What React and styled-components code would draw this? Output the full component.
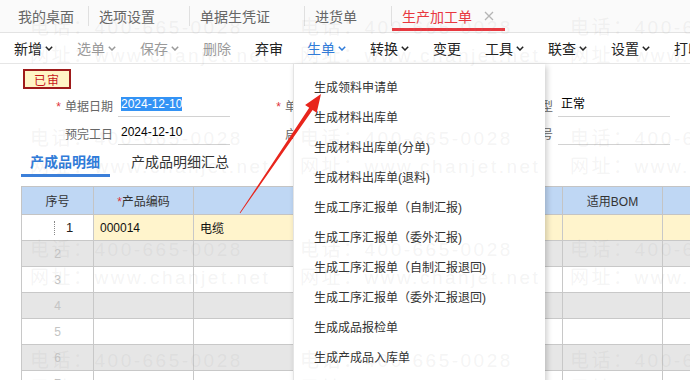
import React from "react";
import styled, { createGlobalStyle } from "styled-components";

const GlobalStyle = createGlobalStyle`
  html, body {
    margin: 0;
    padding: 0;
    background: #fff;
  }
  body {
    font-family: "Liberation Sans", "Noto Sans CJK SC", sans-serif;
    color: #333;
  }
`;

const Page = styled.div`
  position: relative;
  width: 690px;
  height: 380px;
  overflow: hidden;
  background: #fff;
`;

/* top tabs */
const TabBar = styled.div`
  display: flex;
  align-items: stretch;
  height: 32px;
  background: #fafafa;
  border-bottom: 1px solid #e3e3e3;
`;

const Tab = styled.div`
  position: relative;
  display: flex;
  align-items: center;
  gap: 12px;
  padding: ${(p) => (p.$first ? "0 14px 0 18px" : p.$active ? "0 11px 0 10px" : "0 34px 0 10px")};
  font-size: 14px;
  white-space: nowrap;
  color: ${(p) => (p.$active ? "#e8383f" : "#666")};

  &::after {
    content: "";
    display: ${(p) => (p.$active ? "block" : "none")};
    position: absolute;
    left: 0;
    right: 0;
    bottom: 1px;
    height: 3px;
    background: #e8383f;
  }
`;

const TabSep = styled.span`
  align-self: center;
  width: 1px;
  height: 20px;
  background: #e0e0e0;
`;

const CloseIcon = () => (
  <svg width="10" height="10" viewBox="0 0 10 10">
    <path d="M1 1L9 9M9 1L1 9" stroke="#b5b5b5" strokeWidth="1.3" />
  </svg>
);

/* toolbar */
const Toolbar = styled.div`
  display: flex;
  align-items: center;
  height: 30px;
  padding-left: 2px;
  border-bottom: 1px solid #e6e6e6;
  background: #fff;
`;

const ToolButton = styled.div`
  display: flex;
  align-items: center;
  gap: 3px;
  padding: 0 12px;
  font-size: 14px;
  white-space: nowrap;
  color: ${(p) => (p.$primary ? "#2f7bd9" : p.$disabled ? "#9a9a9a" : "#222")};
`;

const ToolSep = styled.span`
  width: 1px;
  height: 14px;
  background: #d6d6d6;
`;

const Chevron = ({ color }) => (
  <svg width="8" height="5" viewBox="0 0 8 5">
    <polyline points="0.8,0.8 4,4 7.2,0.8" fill="none" stroke={color} strokeWidth="1.5" />
  </svg>
);

/* form */
const Body = styled.div`
  padding-top: 5px;
`;

const Stamp = styled.div`
  display: flex;
  align-items: center;
  justify-content: center;
  box-sizing: border-box;
  width: 48px;
  height: 20px;
  margin-left: 23px;
  border: 2px solid #9e1b1b;
  background: #fff5c6;
  color: #c8161d;
  font-size: 12px;
  letter-spacing: 1px;
`;

const Form = styled.div`
  display: grid;
  grid-template-columns: repeat(4, 220px);
  row-gap: 4px;
  margin-top: 4px;
  padding-left: 18px;
`;

const Field = styled.div`
  display: flex;
  align-items: center;
  height: 24px;
`;

const Label = styled.div`
  box-sizing: border-box;
  width: 100px;
  padding-right: 5px;
  text-align: right;
  font-size: 12px;
  color: #666;
  white-space: nowrap;
`;

const Req = styled.span`
  color: #e0333a;
  margin-right: 4px;
`;

const Value = styled.div`
  box-sizing: border-box;
  width: 112px;
  height: 24px;
  padding-left: 3px;
  border-bottom: 1px solid #d2d2d2;
  font-size: 12px;
  line-height: 23px;
  color: #000;
`;

const Selected = styled.span`
  background: #3393f5;
  color: #fff;
`;

/* sub tabs */
const SubTabs = styled.div`
  display: flex;
  gap: 12px;
  height: 29px;
  margin-top: 3px;
  padding-left: 21px;
`;

const SubTab = styled.div`
  box-sizing: border-box;
  display: flex;
  align-items: center;
  height: 29px;
  padding: 0 10px 0 9px;
  font-size: 14px;
  font-weight: ${(p) => (p.$active ? 700 : 400)};
  color: ${(p) => (p.$active ? "#2f7bd9" : "#333")};
  border-bottom: 3px solid ${(p) => (p.$active ? "#3b7fd9" : "transparent")};
`;

/* grid */
const Grid = styled.table`
  margin: 9px 0 0 21px;
  border-collapse: collapse;
  table-layout: fixed;
  width: 941px;
  font-size: 12px;
`;

const HeadCell = styled.th`
  height: 27px;
  padding: 0;
  font-weight: 400;
  color: #333;
  background: #bfd7f4;
  border: 1px solid #c4c4c4;
  text-align: center;
`;

const Row = styled.tr`
  height: 26px;
  background: ${(p) => (p.$grey ? "#e6e6e6" : "#fff")};
`;

const Cell = styled.td`
  padding: 0 0 0 6px;
  border: 1px solid #c8c8c8;
  color: #111;
  white-space: nowrap;
  background: ${(p) => (p.$current ? "#fff4cc" : "transparent")};
`;

const NumCell = styled.td`
  padding: 0;
  border: 1px solid #c8c8c8;
  text-align: center;
  color: #c4c4c4;
  background: ${(p) => (p.$current ? "#fff" : "transparent")};
`;

const EditMark = styled.div`
  display: flex;
  align-items: center;
  padding-left: 32px;
  color: #222;
  font-size: 13px;

  &::before {
    content: "";
    width: 0;
    height: 14px;
    border-left: 1px dotted #888;
    margin-right: 11px;
  }
`;

/* dropdown */
const Menu = styled.div`
  position: absolute;
  left: 293px;
  top: 64px;
  z-index: 2;
  width: 251px;
  padding: 9px 0 12px;
  background: #fff;
  border-left: 1px solid #e4e4e4;
  box-shadow: 2px 2px 6px rgba(0, 0, 0, 0.2);
`;

const MenuItem = styled.div`
  height: 30px;
  line-height: 30px;
  padding-left: 20px;
  font-size: 12px;
  color: #333;
  white-space: nowrap;
`;

const ArrowLayer = styled.svg`
  position: absolute;
  left: 0;
  top: 0;
  z-index: 3;
  pointer-events: none;
`;

/* watermark */
const Watermark = styled.div`
  position: absolute;
  inset: 0;
  z-index: 4;
  display: grid;
  grid-template-columns: repeat(3, 270px);
  grid-auto-rows: 111px;
  padding: 14px 0 0 30px;
  pointer-events: none;
`;

const MarkText = styled.div`
  font-size: 19px;
  line-height: 28px;
  letter-spacing: 2.5px;
  white-space: nowrap;
  color: rgba(150, 150, 150, 0.11);
`;

const topTabs = ["我的桌面", "选项设置", "单据生凭证", "进货单"];

const tools = [
  { t: "新增", c: true },
  { t: "选单", c: true, d: true },
  { t: "保存", c: true, d: true },
  { t: "删除", d: true },
  { sep: true },
  { t: "弃审" },
  { sep: true },
  { t: "生单", c: true, p: true },
  { t: "转换", c: true },
  { sep: true },
  { t: "变更" },
  { sep: true },
  { t: "工具", c: true },
  { t: "联查", c: true },
  { t: "设置", c: true },
  { sep: true },
  { t: "打印" },
];

const menuItems = [
  "生成领料申请单",
  "生成材料出库单",
  "生成材料出库单(分单)",
  "生成材料出库单(退料)",
  "生成工序汇报单（自制汇报)",
  "生成工序汇报单（委外汇报)",
  "生成工序汇报单（自制汇报退回)",
  "生成工序汇报单（委外汇报退回)",
  "生成成品报检单",
  "生成产成品入库单",
];

const columns = [
  { w: 72, t: "序号" },
  { w: 100, t: "产品编码", req: true },
  { w: 252, t: "产品名称", req: true },
  { w: 117, t: "规格型号" },
  { w: 100, t: "适用BOM" },
  { w: 300, t: "数量" },
];

const App = () => {
  return (
    <Page>
      <GlobalStyle />
      <TabBar>
        {topTabs.map((t, i) => (
          <React.Fragment key={t}>
            <Tab $first={i === 0}>{t}</Tab>
            <TabSep />
          </React.Fragment>
        ))}
        <Tab $active>
          生产加工单
          <CloseIcon />
        </Tab>
      </TabBar>

      <Toolbar>
        {tools.map((b, i) =>
          b.sep ? (
            <ToolSep key={i} />
          ) : (
            <ToolButton key={i} $disabled={b.d} $primary={b.p}>
              {b.t}
              {b.c && <Chevron color={b.p ? "#2f7bd9" : b.d ? "#9a9a9a" : "#222"} />}
            </ToolButton>
          )
        )}
      </Toolbar>

      <Body>
        <Stamp>已审</Stamp>
        <Form>
          <Field>
            <Label>
              <Req>*</Req>单据日期
            </Label>
            <Value>
              <Selected>2024-12-10</Selected>
            </Value>
          </Field>
          <Field>
            <Label>
              <Req>*</Req>单据编号
            </Label>
            <Value />
          </Field>
          <Field>
            <Label>单据类型</Label>
            <Value>正常</Value>
          </Field>
          <Field />
          <Field>
            <Label>预完工日</Label>
            <Value>2024-12-10</Value>
          </Field>
          <Field>
            <Label>启用工序</Label>
            <Value />
          </Field>
          <Field>
            <Label>生产批号</Label>
            <Value />
          </Field>
          <Field />
        </Form>

        <SubTabs>
          <SubTab $active>产成品明细</SubTab>
          <SubTab>产成品明细汇总</SubTab>
        </SubTabs>

        <Grid>
          <colgroup>
            {columns.map((c) => (
              <col key={c.t} style={{ width: c.w }} />
            ))}
          </colgroup>
          <thead>
            <tr>
              {columns.map((c) => (
                <HeadCell key={c.t}>
                  {c.req && <span style={{ color: "#e0333a" }}>*</span>}
                  {c.t}
                </HeadCell>
              ))}
            </tr>
          </thead>
          <tbody>
            <Row>
              <NumCell $current>
                <EditMark>1</EditMark>
              </NumCell>
              <Cell $current>000014</Cell>
              <Cell $current>电缆</Cell>
              <Cell $current />
              <Cell $current />
              <Cell $current />
            </Row>
            {[2, 3, 4, 5, 6, 7].map((n) => (
              <Row key={n} $grey={n % 2 === 0}>
                <NumCell>{n}</NumCell>
                {[0, 1, 2, 3, 4].map((k) => (
                  <Cell key={k} />
                ))}
              </Row>
            ))}
          </tbody>
        </Grid>
      </Body>

      <Menu>
        {menuItems.map((m) => (
          <MenuItem key={m}>{m}</MenuItem>
        ))}
      </Menu>

      <ArrowLayer width="690" height="380" viewBox="0 0 690 380">
        <polygon
          fill="#e8251c"
          points="321,94 316.7,112.8 312.6,110 240.3,213.2 239.7,212.8 309.2,107.8 305.1,105"
        />
      </ArrowLayer>

      <Watermark>
        {Array.from({ length: 12 }).map((_, i) => (
          <div key={i}>
            <MarkText>电话：400-665-0028</MarkText>
            <MarkText>网址：www.chanjet.net</MarkText>
          </div>
        ))}
      </Watermark>
    </Page>
  );
};

export default App;
